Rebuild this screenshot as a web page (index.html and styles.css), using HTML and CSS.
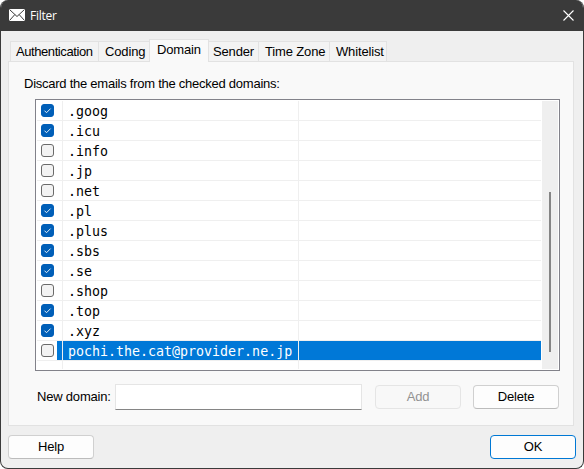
FILE: index.html
```
<!DOCTYPE html>
<html lang="en">
<head>
<meta charset="utf-8">
<title>Filter</title>
<link rel="stylesheet" href="styles.css">
</head>
<body>
<div class="window">
  <header class="titlebar">
    <svg class="mail" width="16" height="12" viewBox="0 0 16 12"><rect width="16" height="12" fill="#fff"/><path d="M.5 .5L8 7.5L15.5 .5M.5 11.5L5.8 5.6M15.5 11.5L10.2 5.6" fill="none" stroke="#3a3a3a" stroke-width="1"/></svg>
    <span class="title">Filter</span>
    <svg class="close" width="11" height="11" viewBox="0 0 11 11"><path d="M.5 .5L10.5 10.5M10.5 .5L.5 10.5" stroke="#fff" stroke-width="1.1"/></svg>
  </header>
  <nav class="tabs">
    <div class="tab auth"><span>Authentication</span></div>
    <div class="tab coding"><span>Coding</span></div>
    <div class="tab domain active"><span>Domain</span></div>
    <div class="tab sender"><span>Sender</span></div>
    <div class="tab zone"><span>Time Zone</span></div>
    <div class="tab white"><span>Whitelist</span></div>
  </nav>
  <main class="panel">
    <p class="intro">Discard the emails from the checked domains:</p>
    <div class="list">
      <div class="rows" id="rows"></div>
      <div class="scroll"><div class="thumb"></div></div>
    </div>
    <div class="form">
      <label class="label" for="d">New domain:</label>
      <input class="field" id="d" type="text">
      <button class="btn add" disabled>Add</button>
      <button class="btn">Delete</button>
    </div>
  </main>
  <footer class="footer">
    <button class="btn">Help</button>
    <button class="btn primary">OK</button>
  </footer>
</div>
<script src="script.js"></script>
</body>
</html>
```
FILE: styles.css
```
* { box-sizing: border-box; }
html { background: #fff; }
body { margin: 0; font: 13px "Liberation Sans", Arial, sans-serif; color: #000; }
.window { width: 584px; height: 469px; border: 1px solid #3a3a3a; border-top: 0; border-radius: 8px; background: #efefef; overflow: hidden; }
.titlebar { height: 31px; background: #3a3a3a; display: flex; align-items: center; padding: 0 9px 0 8px; color: #fff; }
.mail { margin-top: -1px; }
.title { font: 12px/16px "Open Sans", "Noto Sans", sans-serif; letter-spacing: -.25px; margin-left: 5px; flex: 1; }
.close { margin-top: -1px; }
.tabs { height: 30px; padding-left: 9px; display: flex; align-items: flex-end; letter-spacing: -.15px; }
.tab { height: 20px; border: 1px solid #e2e2e2; border-width: 1px 1px 0 0; background: #f3f3f3; line-height: 19px; white-space: nowrap; padding-left: 5px; }
.auth { width: 89px; border-left-width: 1px; letter-spacing: -.42px; }
.coding { width: 51px; padding-left: 6px; border-right: 0; }
.domain { width: 60px; margin-left: -1px; padding-left: 7px; }
.sender { width: 50px; padding-left: 4px; }
.zone { width: 71px; padding-left: 6px; }
.white { width: 57px; padding-left: 6px; }
.tab.active { height: 23px; margin-bottom: -1px; background: #f9f9f9; border-left-width: 1px; line-height: 20px; position: relative; }
.panel { margin-left: 7px; width: 566px; height: 365px; border: 1px solid #e2e2e2; background: #f9f9f9; padding: 14px 13px 0 15px; }
.intro { margin: 0; line-height: 16px; height: 23px; letter-spacing: -.25px; }
.list { margin-left: 11px; width: 525px; height: 272px; border: 1px solid #82828a; background: #fff; padding: 1px; display: flex; }
.rows { width: 504px; height: 268px; display: flex; flex-direction: column; }
.row { height: 20px; display: flex; border-bottom: 1px solid #efefef; flex: none; }
.check { width: 26px; border-right: 1px solid #efefef; padding: 3px 0 0 4px; }
.name { width: 236px; border-right: 1px solid #efefef; padding-left: 5px; font: 13.3px/21px "DejaVu Sans Mono", monospace; white-space: pre; }
.rest { flex: 1; }
.row.blank { border: 0; height: 8px; }
.box { display: block; }
.selected .name, .selected .rest { background: #0078d7; color: #fff; }
.selected .check { background: linear-gradient(90deg, #fff 20px, #0078d7 20px); }
.scroll { width: 16px; margin-left: 1px; background: #efefef; padding: 91px 0 0 7px; }
.thumb { width: 2px; height: 160px; background: #858585; }
.form { display: flex; align-items: center; height: 26px; margin-top: 13px; padding-left: 13px; }
.label { width: 78px; line-height: 16px; letter-spacing: -.2px; }
.field { width: 247px; height: 26px; border: 1px solid #e5e5e5; border-bottom-color: #858585; background: #fff; margin-right: 13px; padding: 0 4px; }
.btn { width: 86px; height: 24px; border: 1px solid #d0d0d0; border-bottom-color: #bcbcbc; border-radius: 4px; background: #fdfdfd; font: inherit; letter-spacing: -.2px; color: #000; padding: 0; line-height: 22px; }
.btn.add { margin-right: 12px; color: #929292; background: #f8f8f8; border-color: #e5e5e5; }
.footer { display: flex; justify-content: space-between; padding: 9px 7px 0 7px; }
.btn.primary { border-color: #0078d4; }
```
FILE: script.js
```
const domains = [
  [".goog", 1], [".icu", 1], [".info", 0], [".jp", 0], [".net", 0], [".pl", 1], [".plus", 1],
  [".sbs", 1], [".se", 1], [".shop", 0], [".top", 1], [".xyz", 1], ["pochi.the.cat@provider.ne.jp", 0]
];
const box = on => `<svg class="box" width="13" height="13" viewBox="0 0 13 13"><rect x=".5" y=".5" width="12" height="12" rx="2.5" fill="${on ? "#005fb8" : "#f3f3f3"}" stroke="${on ? "#005fb8" : "#6a6a6a"}"/>${on ? '<path d="M3.5 6.7L5.5 8.7L9.6 4.6" fill="none" stroke="#fff" stroke-width=".9"/>' : ""}</svg>`;
document.getElementById("rows").innerHTML = domains.map(([name, on], i) =>
  `<div class="row${i === domains.length - 1 ? " selected" : ""}"><div class="check">${box(on)}</div><div class="name">${name}</div><div class="rest"></div></div>`
).join("") + '<div class="row blank"><div class="check"></div><div class="name"></div></div>';
```
